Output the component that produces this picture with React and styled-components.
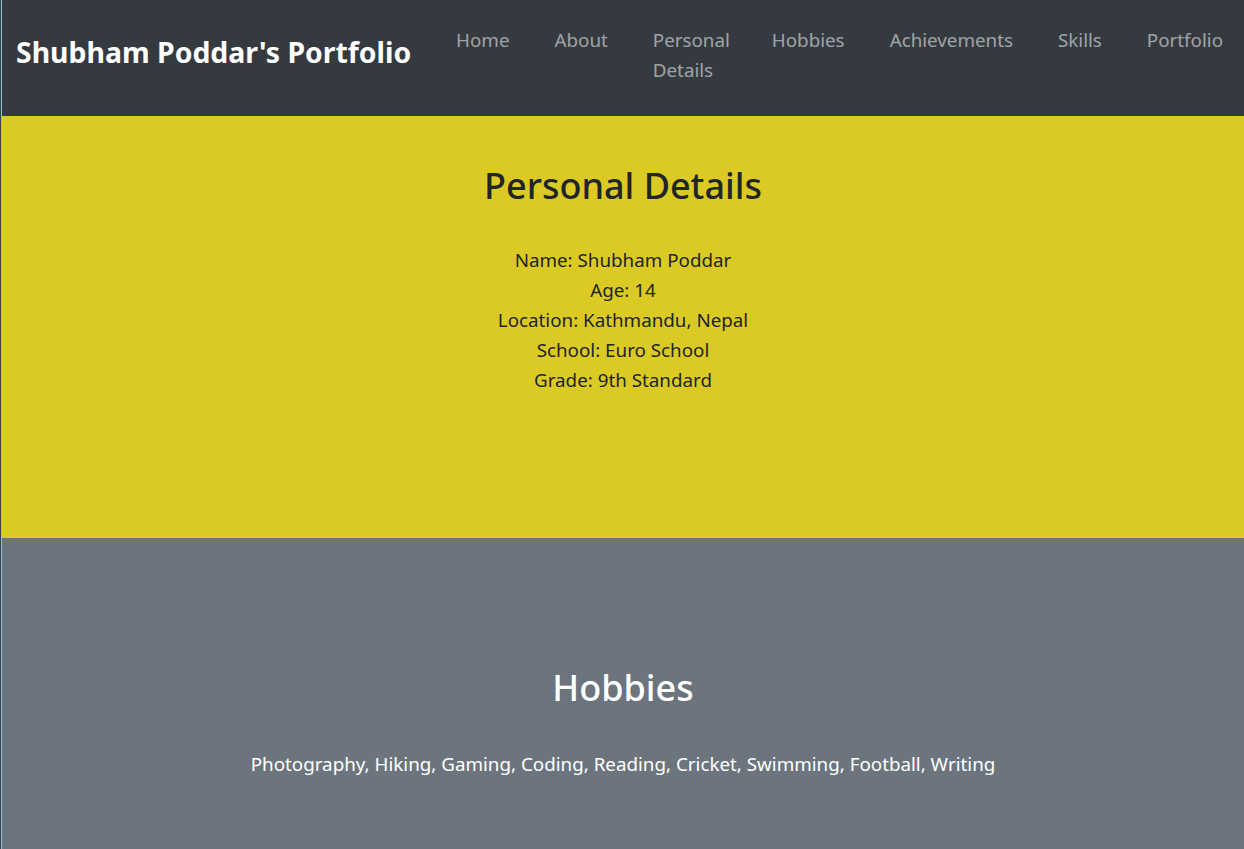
import styled, { createGlobalStyle } from "styled-components";

const GlobalStyle = createGlobalStyle`
  html, body {
    margin: 0;
    padding: 0;
  }

  body {
    background: #3b4047;
    padding-left: 1px;
    font-family: "Segoe UI", "Noto Sans", "Open Sans", sans-serif;
    font-size: 18.8px;
    line-height: 30px;
    color: #212529;
  }

  * {
    box-sizing: border-box;
  }
`;

const Page = styled.div`
  border-left: 1px solid #8cc4e2;
  min-height: 849px;
  background: #6c757d;
`;

const Navbar = styled.nav`
  display: flex;
  align-items: flex-start;
  background: #343a40;
  padding: 25px 21px 16px 14px;
  height: 116px;
`;

const Brand = styled.a`
  flex: none;
  margin-top: 9px;
  font-size: 28.4px;
  font-weight: 700;
  line-height: 36px;
  color: #fff;
  text-decoration: none;
`;

const NavList = styled.ul`
  display: flex;
  flex: 1;
  justify-content: flex-end;
  gap: 45px;
  list-style: none;
  margin: 0;
  padding: 0;
`;

const NavItem = styled.li`
  width: ${(p) => (p.$narrow ? "74px" : "auto")};
`;

const NavLink = styled.a`
  display: block;
  color: rgba(255, 255, 255, 0.55);
  text-decoration: none;
  line-height: 30px;
`;

const Section = styled.section`
  background: ${(p) => p.$bg};
  color: ${(p) => p.$color};
  text-align: center;
  padding: ${(p) => p.$pad};
  min-height: ${(p) => p.$minHeight};
`;

const Heading = styled.h2`
  margin: 0 0 ${(p) => p.$gap || "37px"};
  font-size: 36px;
  font-weight: 500;
  line-height: 48px;
`;

const Text = styled.p`
  margin: 0;
`;

const links = [
  "Home",
  "About",
  "Personal Details",
  "Hobbies",
  "Achievements",
  "Skills",
  "Portfolio",
];

const details = [
  "Name: Shubham Poddar",
  "Age: 14",
  "Location: Kathmandu, Nepal",
  "School: Euro School",
  "Grade: 9th Standard",
];

export default function App() {
  return (
    <>
      <GlobalStyle />
      <Page>
        <Navbar>
          <Brand href="#">Shubham Poddar's Portfolio</Brand>
          <NavList>
            {links.map((l) => (
              <NavItem key={l} $narrow={l === "Personal Details"}>
                <NavLink href="#">{l}</NavLink>
              </NavItem>
            ))}
          </NavList>
        </Navbar>

        <Section $bg="#dcca24" $color="#212529" $pad="46px 20px 20px" $minHeight="422px">
          <Heading $gap="35px">Personal Details</Heading>
          {details.map((d) => (
            <Text key={d}>{d}</Text>
          ))}
        </Section>

        <Section $bg="#6c757d" $color="#fff" $pad="126px 20px 60px">
          <Heading>Hobbies</Heading>
          <Text>
            Photography, Hiking, Gaming, Coding, Reading, Cricket, Swimming,
            Football, Writing
          </Text>
        </Section>
      </Page>
    </>
  );
}
